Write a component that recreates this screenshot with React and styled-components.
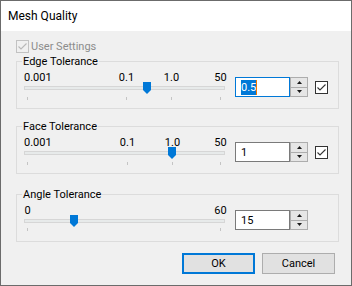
import styled, { createGlobalStyle } from "styled-components";

const GlobalStyle = createGlobalStyle`
  html, body {
    margin: 0;
    padding: 0;
    background: #ffffff;
  }
  * {
    box-sizing: border-box;
  }
`;

const Window = styled.div`
  width: 352px;
  height: 286px;
  border: 1px solid #6b6b6b;
  background: #f0f0f0;
  display: flex;
  flex-direction: column;
  font-family: Roboto, "Segoe UI", sans-serif;
  color: #000;
`;

const TitleBar = styled.div`
  height: 30px;
  flex-shrink: 0;
  background: #ffffff;
  display: flex;
  align-items: center;
  padding-left: 7px;
  font-size: 12px;
`;

const Body = styled.div`
  flex: 1;
  display: flex;
  flex-direction: column;
  padding: 9px 12px 0 15px;
  font-size: 11px;
`;

const UserRow = styled.div`
  display: flex;
  align-items: center;
  gap: 2px;
  height: 13px;
  line-height: 13px;
  color: #8c8c8c;
`;

const Box = styled.div`
  width: 13px;
  height: 13px;
  flex-shrink: 0;
  border: 1px solid ${(p) => (p.disabled ? "#c2c2c2" : "#333333")};
  background: ${(p) => (p.disabled ? "#f0f0f0" : "#ffffff")};
  margin: ${(p) => p.margin || "0"};
  display: flex;
  align-items: center;
  justify-content: center;
`;

const Group = styled.div`
  position: relative;
  height: 48px;
  flex-shrink: 0;
  margin-top: ${(p) => p.gap}px;
  border: 1px solid #dcdcdc;
  display: flex;
  align-items: flex-start;
  padding: 9px 0 0 7px;
`;

const Legend = styled.span`
  position: absolute;
  top: -7px;
  left: 5px;
  padding: 0 1px;
  line-height: 13px;
  background: #f0f0f0;
`;

const Slider = styled.div`
  position: relative;
  width: 201px;
  height: 30px;
  flex-shrink: 0;
`;

const Mark = styled.span`
  position: absolute;
  top: 0;
  line-height: 13px;
  white-space: nowrap;
  transform: ${(p) => (p.anchor === "start" ? "none" : "translateX(-50%)")};
`;

const Track = styled.div`
  position: absolute;
  top: 15px;
  left: 0;
  right: 0;
  height: 4px;
  background: #e7eaea;
  border: 1px solid #d6d6d6;
`;

const Tick = styled.div`
  position: absolute;
  top: ${(p) => p.top}px;
  width: 1px;
  height: 3px;
  background: #c4c4c4;
`;

const Thumb = styled.svg`
  position: absolute;
  top: 11px;
  display: block;
`;

const SpinBox = styled.div`
  display: flex;
  height: 20px;
  margin: 6px 0 0 10px;
`;

const TextBox = styled.div`
  width: 55px;
  height: 20px;
  background: #ffffff;
  border: 1px solid ${(p) => (p.focused ? "#0078d7" : "#7a7a7a")};
  padding-left: 5px;
  display: flex;
  align-items: center;
  line-height: 15px;
`;

const Selected = styled.span`
  background: #0078d7;
  color: #ffffff;
  height: 15px;
`;

const Caret = styled.span`
  width: 1px;
  height: 15px;
  background: #f07a00;
`;

const Spinner = styled.div`
  width: 18px;
  height: 20px;
  border: 1px solid #adadad;
  background: #e6e6e6;
  display: flex;
  flex-direction: column;
`;

const SpinHalf = styled.div`
  flex: 1;
  display: flex;
  align-items: center;
  justify-content: center;
  border-top: ${(p) => (p.lower ? "1px solid #adadad" : "none")};
`;

const ButtonRow = styled.div`
  display: flex;
  justify-content: flex-end;
  gap: 7px;
  margin-top: 11px;
  padding-right: 4px;
`;

const Button = styled.div`
  width: 73px;
  height: 21px;
  background: #e1e1e1;
  border: ${(p) => (p.focused ? "2px solid #0078d7" : "1px solid #adadad")};
  display: flex;
  align-items: center;
  justify-content: center;
`;

const Check = ({ color = "#333" }) => (
  <svg width="11" height="11" viewBox="0 0 11 11">
    <path d="M1.5 5.5 L4 8 L9.5 2.5" fill="none" stroke={color} strokeWidth="1.1" />
  </svg>
);

const groups = [
  {
    title: "Edge Tolerance",
    gap: 8,
    marks: [
      { x: 3, label: "0.001", anchor: "start" },
      { x: 102, label: "0.1" },
      { x: 147, label: "1.0" },
      { x: 196, label: "50" },
    ],
    tickTop: 26,
    thumb: 119,
    value: "0.5",
    focused: true,
    check: true,
  },
  {
    title: "Face Tolerance",
    gap: 17,
    marks: [
      { x: 3, label: "0.001", anchor: "start" },
      { x: 103, label: "0.1" },
      { x: 148, label: "1.0" },
      { x: 196, label: "50" },
    ],
    tickTop: 26,
    thumb: 144,
    value: "1",
    check: true,
  },
  {
    title: "Angle Tolerance",
    gap: 20,
    marks: [
      { x: 3, label: "0" },
      { x: 196, label: "60" },
    ],
    tickTop: 24,
    thumb: 46,
    value: "15",
  },
];

const ToleranceGroup = ({ g }) => (
  <Group gap={g.gap}>
    <Legend>{g.title}</Legend>
    <Slider>
      {g.marks.map((m) => (
        <Mark key={m.label} anchor={m.anchor} style={{ left: m.x + (m.anchor === "start" ? -3 : 0.5) }}>
          {m.label}
        </Mark>
      ))}
      <Track />
      {g.marks.map((m) => (
        <Tick key={"t" + m.label} top={g.tickTop} style={{ left: m.x }} />
      ))}
      <Thumb width="8" height="12" viewBox="0 0 8 12" style={{ left: g.thumb }}>
        <path d="M0 0 H8 V8 L4 12 L0 8 Z" fill="#0078d7" />
      </Thumb>
    </Slider>
    <SpinBox>
      <TextBox focused={g.focused}>
        {g.focused ? (
          <>
            <Selected>{g.value}</Selected>
            <Caret />
          </>
        ) : (
          g.value
        )}
      </TextBox>
      <Spinner>
        <SpinHalf>
          <svg width="5" height="3" viewBox="0 0 5 3">
            <path d="M0 3 L2.5 0 L5 3 Z" fill="#1a1a1a" />
          </svg>
        </SpinHalf>
        <SpinHalf lower>
          <svg width="5" height="3" viewBox="0 0 5 3">
            <path d="M0 0 L2.5 3 L5 0 Z" fill="#1a1a1a" />
          </svg>
        </SpinHalf>
      </Spinner>
    </SpinBox>
    {g.check && (
      <Box margin="10px 0 0 7px">
        <Check />
      </Box>
    )}
  </Group>
);

export default function App() {
  return (
    <>
      <GlobalStyle />
      <Window>
        <TitleBar>Mesh Quality</TitleBar>
        <Body>
          <UserRow>
            <Box disabled>
              <Check color="#b8b8b8" />
            </Box>
            User Settings
          </UserRow>
          {groups.map((g) => (
            <ToleranceGroup key={g.title} g={g} />
          ))}
          <ButtonRow>
            <Button focused>OK</Button>
            <Button>Cancel</Button>
          </ButtonRow>
        </Body>
      </Window>
    </>
  );
}
